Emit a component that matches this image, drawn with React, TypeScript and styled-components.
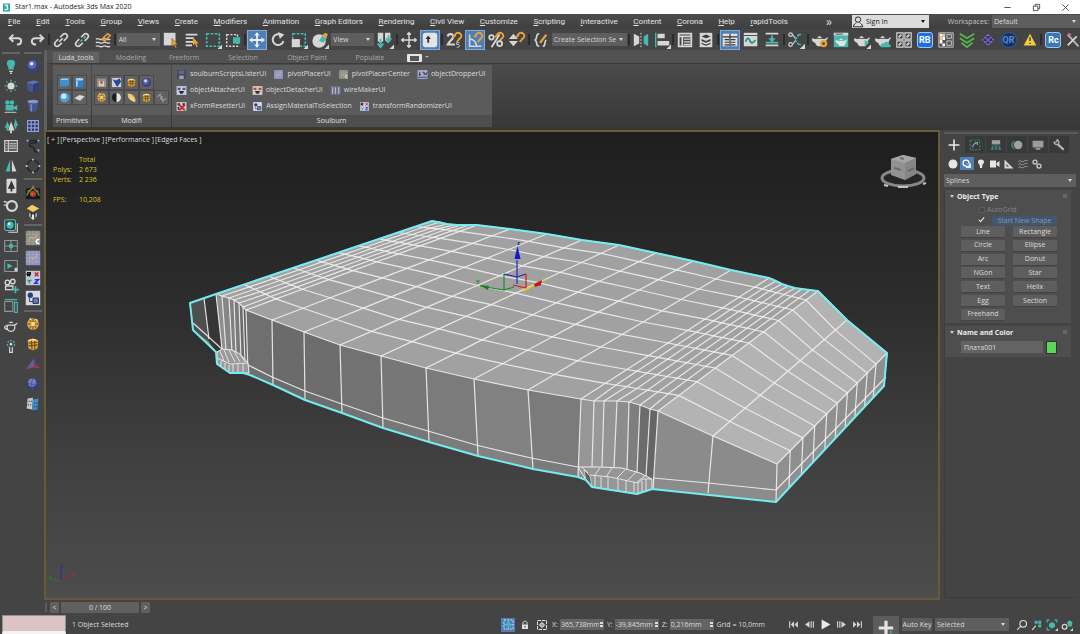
import React from "react";
import styled, { createGlobalStyle, css } from "styled-components";

const L = "#d6d6d6";
const T = "#45b9ae";
const O = "#e6a23c";

const Global = createGlobalStyle`
  * { box-sizing: border-box; }
  body { margin: 0; background: #444; }
  body, button, select, input {
    font-family: "Open Sans", "Noto Sans", sans-serif;
    font-size: 7px;
    line-height: 10px;
    color: #dcdcdc;
  }
  button { border: 0; padding: 0; background: none; }
  h2, p { margin: 0; }
`;

/* ---------- icons, all on a 20 x 20 grid ---------- */

const teapot = (fill: string) => (
  <g fill={fill}>
    <path d="M5 9h9c2 0 3-1 4-2l1 1c-1 1-2 1.500-2.500 4-.5 2-1.500 4-3 5h-6C5.500 16 5 14 4.500 13 2.500 13 1 11 1 9l1-1c1 .5 1.500 1 3 1z" />
    <path d="M6 8c1-1.500 6-1.500 7 0zM8.500 5.500h2V7h-2z" />
  </g>
);
const corner = <path d="M20 15v5h-5z" fill={L} />;
const magnet = <path d="M9 7l3-4c4-3 8 2 5 5l-4 4M11 5l1 1M16 9l-1-1" stroke={O} strokeWidth="2" fill="none" />;
const goldBall = (
  <g>
    <circle cx="10" cy="10" r="6.500" fill="#d9a84a" />
    <path d="M4 10h12M10 4v12M6 5l8 10M14 5L6 15" stroke="#6d4a12" strokeWidth="1" />
    <path d="M8 8h4v4H8z" fill="#ffe28f" />
    <path d="M6 5l2-1M13 5l2 1" stroke="#fff3c4" strokeWidth="1.500" />
  </g>
);
const goldCube = (
  <g>
    <path d="M4 6l6-2 6 2-1 9-5 2-5-2z" fill="#dba63f" />
    <path d="M5 9l10-1M5 12l10-1M8 5l1 11M12 5v11" stroke="#6e4710" strokeWidth="1.200" />
    <path d="M5 6l5-1 4 1" stroke="#ffe9a6" fill="none" strokeWidth="1.500" />
  </g>
);
const mesh = (bg: string, fg: string) => (
  <g>
    <path d="M2 2h16v16H2z" fill={bg} />
    <path d="M2 6h16M2 10h16M2 14h16M6 2v16M10 2v16M14 2v16" stroke={fg} strokeWidth="1" strokeDasharray="2 1" />
    <path d="M5 13l3-4 3 2 4-5" stroke="#e8b26a" strokeWidth="1" fill="none" />
  </g>
);

const ICONS: Record<string, React.ReactNode> = {
  undo: <path d="M7 4L3 8l4 4M3 8h9c5 0 5 7 0 7h-1" stroke={L} strokeWidth="2.200" fill="none" />,
  redo: <path d="M13 4l4 4-4 4M17 8H8c-5 0-5 7 0 7h1" stroke={L} strokeWidth="2.200" fill="none" />,
  link: <path d="M8 12l4-4M9 7l3-3c3-3 7 1 4 4l-3 3M11 13l-3 3c-3 3-7-1-4-4l3-3" stroke={L} strokeWidth="1.800" fill="none" />,
  unlink: (
    <g fill="none" strokeWidth="1.800">
      <path d="M9 7l3-3c3-3 7 1 4 4l-3 3M11 13l-3 3c-3 3-7-1-4-4l3-3" stroke={L} />
      <path d="M14 6L6 14" stroke={T} strokeDasharray="3 2" />
    </g>
  ),
  bind: (
    <g fill="none" strokeWidth="1.500">
      <path d="M2 9c3-2 5 2 8 0s5 2 8 0M2 13c3-2 5 2 8 0s5 2 8 0M2 17c3-2 5 2 8 0s5 2 8 0" stroke={L} />
      <path d="M9 9l6-6 3 2-6 6z" stroke={O} strokeWidth="1.800" />
    </g>
  ),
  selObj: (
    <g>
      <path d="M2 2h13v14H2z" fill={L} />
      <path d="M11 8v9l2-2 2 4 1.500-1-2-3h3z" fill={O} stroke="#5d3d10" strokeWidth=".5" />
    </g>
  ),
  selName: (
    <g>
      <path d="M3 4h13M3 8h9M3 12h11M3 16h7" stroke={L} strokeWidth="2" />
      <path d="M11 7v9l2-2 2 4 1.500-1-2-3h3z" fill={O} />
    </g>
  ),
  rect: (
    <g>
      <path d="M3 3h14v14H3z" fill="none" stroke={T} strokeWidth="1.800" strokeDasharray="3 1.500" />
      {corner}
    </g>
  ),
  windowSel: (
    <g>
      <path d="M3 4h12v13H3z" fill="none" stroke={L} strokeWidth="1.600" strokeDasharray="2.500 1.500" />
      <path d="M10 7h8v7h-8z" fill={T} />
    </g>
  ),
  move: <path d="M10 1l3 4h-2v4h4V7l4 3-4 3v-2h-4v4h2l-3 4-3-4h2v-4H5v2l-4-3 4-3v2h4V5H7z" fill="#eee" />,
  rotate: (
    <g>
      <path d="M14 5a6 6 0 1 0 2 6" stroke={L} strokeWidth="2.200" fill="none" />
      <path d="M10 1l7 3-5 5z" fill={L} />
    </g>
  ),
  scale: (
    <g>
      <path d="M3 3h14v14H3z" fill="none" stroke={T} strokeWidth="1.700" strokeDasharray="3 1.500" />
      <path d="M2 9h9v9H2z" fill={L} />
      {corner}
    </g>
  ),
  place: (
    <g>
      <circle cx="9" cy="11" r="7.500" fill={L} />
      <path d="M9 11l4-7 5 3-4 6z" fill={T} />
      <path d="M12 5l4-3 3 2-3 4z" fill={O} />
      {corner}
    </g>
  ),
  pivot: (
    <g>
      <path d="M2 2h6v9l-3 3-3-3zM10 2h6v8l-3 3-3-3z" fill={L} />
      <path d="M5 9v9M2 14l3 4 3-4M14 5v7M11 8l3 4 3-4" stroke={T} strokeWidth="2" fill="none" />
      {corner}
    </g>
  ),
  manip: <path d="M10 2v16M2 10h16M8 4l2-2 2 2M8 16l2 2 2-2M4 8l-2 2 2 2M16 8l2 2-2 2" stroke={L} strokeWidth="1.700" fill="none" />,
  keyb: (
    <g>
      <rect x="2" y="2" width="16" height="16" rx="3" fill="#e4e4e4" />
      <path d="M8 5l3 4H9v4H7V9H5z" fill="#333" />
    </g>
  ),
  snap: (
    <g>
      <path d="M3 6c1-4 7-3 6 1-1 3-5 5-6 8h8" stroke={L} strokeWidth="2.400" fill="none" />
      {magnet}
      <path d="M16 13h-3v2c4-1 4 4 0 3" stroke={L} strokeWidth="1" fill="none" />
    </g>
  ),
  angle: (
    <g>
      <path d="M4 4v13h13M4 9c4 0 7 3 8 8" stroke={L} strokeWidth="1.700" fill="none" />
      {magnet}
    </g>
  ),
  percent: (
    <g fill="none" stroke={L} strokeWidth="2">
      {magnet}
      <circle cx="5" cy="7" r="2.500" />
      <circle cx="14" cy="14" r="2.800" />
      <path d="M14 4L5 18" />
    </g>
  ),
  spinner: (
    <g>
      <path d="M1 9l5-6 5 6zM1 11l5 6 5-6z" fill={L} />
      {magnet}
    </g>
  ),
  braces: (
    <g fill="none" strokeWidth="1.800">
      <path d="M8 3c-5 0-1 6-5 7 4 1 0 7 5 7M12 17c4 0 1-6 4-7" stroke={L} />
      <path d="M9 13l7-9" stroke={O} strokeWidth="2.500" />
    </g>
  ),
  mirror: (
    <g>
      <path d="M2 3l6 3v8l-6 3z" fill={L} />
      <path d="M18 3l-5 3v8l5 3z" fill={T} />
      <path d="M10 2v16" stroke={L} strokeDasharray="2 1.500" />
    </g>
  ),
  align: (
    <g>
      <path d="M3 2v16" stroke={T} strokeWidth="1.500" />
      <path d="M5 3h8v5H5zM5 11h13v5H5z" fill={L} />
      {corner}
    </g>
  ),
  layers: (
    <g fill="none" stroke={L} strokeWidth="1.500">
      <path d="M3 3h14v14H3zM3 6h14M7 6v11" strokeWidth="2" />
      <path d="M9 9h7M9 12h7M9 15h7" />
    </g>
  ),
  stack: (
    <g>
      <path d="M3 2h14v16H3z" fill={L} />
      <path d="M10 4l5 2-5 2-5-2zM5 9l5 2 5-2v2l-5 2-5-2zM5 13l5 2 5-2v1.500l-5 2-5-2z" fill="#3c3c3c" />
    </g>
  ),
  ribbon: (
    <g>
      <path d="M2 3h16v14H2z" fill="#e2e2e2" />
      <path d="M2 6.500h16M4 9.500h5M11 9.500h5M4 12.500h5M11 12.500h5M4 15.500h5M11 15.500h5M10 3v14" stroke="#333" strokeWidth="1.300" />
    </g>
  ),
  curve: (
    <g>
      <path d="M2 2h15v15H2z" fill={L} />
      <path d="M2 5h15" stroke="#444" />
      <path d="M4 12c2-6 4-4 5-1s3 3 6-1" stroke="#279187" strokeWidth="2" fill="none" />
    </g>
  ),
  dope: (
    <g>
      <path d="M3 2h14v2H3zM3 15h14v2H3z" fill={L} />
      <path d="M10 5v6M3 13h14" stroke={T} strokeWidth="2" />
      <path d="M6 8h8l-4 5z" fill={T} />
    </g>
  ),
  schematic: (
    <g fill="none" stroke={L} strokeWidth="1.300">
      <circle cx="4" cy="4" r="2" />
      <circle cx="4" cy="15" r="2" />
      <path d="M6 4l4 5M6 15l4-5" />
      <path d="M13 4l-4 6 4 5M13 4h4M13 15h4" stroke={T} strokeDasharray="2.500 1.200" strokeWidth="1.800" />
      {corner}
    </g>
  ),
  potGear: (
    <g>
      {teapot(L)}
      <circle cx="14" cy="14" r="4" fill={O} />
      <circle cx="14" cy="14" r="1.500" fill="#5b4016" />
    </g>
  ),
  potWin: (
    <g>
      <path d="M2 2h16v16H2z" fill={T} />
      <path d="M2 2h16v3H2z" fill={L} />
      <path d="M4 3.500h8" stroke="#444" />
      <g transform="translate(3 4) scale(.75)">{teapot("#e4e4e4")}</g>
    </g>
  ),
  potPlay: (
    <g>
      {teapot(L)}
      <path d="M13 10l5 3-5 4z" fill={T} />
      {corner}
    </g>
  ),
  potCloud: (
    <g>
      {teapot(L)}
      <path d="M8 18c-2-3 2-5 3-4 2-4 6-1 6 1 3 1 2 3 0 3z" fill={T} />
    </g>
  ),
  four: (
    <g fill="none" stroke={L} strokeWidth="1.300">
      <path d="M2 2h7v7H2zM11 2h7v7h-7zM2 11h7v7H2zM11 11h7v7h-7z" />
      <path d="M4 7l3-3M13 7l3-3M4 16l3-3M13 16l3-3" strokeWidth="2" />
    </g>
  ),
  checker: (
    <g>
      <path d="M2 2h16v16H2z" fill="#555" stroke="#c8c8c8" />
      <path d="M3 3h3v3H3zM6 6h3v4H6zM3 10h3v4H3zM6 14h3v3H6z" fill="#fff" />
      <path d="M6 3h3v3H6zM3 6h3v4H3z" fill="#f1d08f" />
      <path d="M11 4h5v4h-5zM11 11h5v5h-5z" stroke="#ccc" fill="none" />
    </g>
  ),
  chevrons: <path d="M2 3l8 5 8-5M2 8l8 5 8-5M4 13l6 5 6-5" stroke="#55b848" strokeWidth="2" fill="none" />,
  diamonds: (
    <g>
      <path d="M10 4l6 6-6 6-6-6z" fill="#342d66" stroke="#8a78d8" strokeWidth="1.500" strokeDasharray="2 1.500" />
      <path d="M7 7l6 6M13 7l-6 6" stroke="#7264b8" strokeWidth="1.500" />
    </g>
  ),
  warn: (
    <g>
      <path d="M10 3l7 13H3z" fill="#f0cf3c" />
      <path d="M10 7v4M10 13v1.500" stroke="#333" strokeWidth="1.500" />
    </g>
  ),
  tools: (
    <g fill="none">
      <path d="M3 4l12 13" stroke="#b9b9b9" strokeWidth="2" />
      <path d="M3 16L13 6" stroke={L} strokeWidth="2" />
      <path d="M3 3l4 1" stroke="#c66" strokeWidth="2" />
    </g>
  ),

  bulb: (
    <g>
      <path d="M10 3c6 0 5 6 3 8v3H7v-3C5 9 4 3 10 3z" fill={T} />
      <path d="M8 16h4M9 18h2" stroke={L} strokeWidth="1.500" />
    </g>
  ),
  sun: (
    <g>
      <circle cx="10" cy="10" r="4" fill={L} />
      <path d="M10 3v2M10 15v2M3 10h2M15 10h2M5 5l1 1M14 14l1 1M15 5l-1 1M5 15l1-1" stroke={T} strokeWidth="1.500" />
    </g>
  ),
  cam: (
    <g fill={T}>
      <circle cx="6" cy="6" r="2.500" />
      <circle cx="11" cy="6" r="2.500" />
      <path d="M4 9h9v6H4zM13 11l4-2v6l-4-2z" />
      <path d="M3 17h13" stroke={L} />
    </g>
  ),
  trees: (
    <g>
      <path d="M6 5l3 7H7v3H5v-3H3zM15 2l3 8h-2v3h-2v-3h-1z" fill={T} />
      <path d="M10 5l4 10h-3v3H9v-3H7z" fill={L} />
    </g>
  ),
  list: (
    <g fill="none" stroke={L}>
      <path d="M3 4h14v12H3zM7 4v12" strokeWidth="1.300" />
      <path d="M8 7h8M8 9h8M8 11h8M8 13h8M4 7h2M4 10h2M4 13h2" />
    </g>
  ),
  treeHalf: (
    <g>
      <path d="M9 3v13H4z" fill={T} />
      <path d="M11 3v13h5z" fill={L} />
    </g>
  ),
  treeCard: (
    <g>
      <rect x="5" y="2" width="11" height="16" rx="1" fill={L} />
      <path d="M10.500 4l4 9h-3v3h-2v-3h-3z" fill="#333" />
    </g>
  ),
  ring: (
    <g>
      <circle cx="11" cy="10" r="5.500" fill="none" stroke={L} strokeWidth="2.500" />
      <path d="M2 5l4 1M2 9h4" stroke={L} strokeWidth="1.500" />
    </g>
  ),
  ballStack: (
    <g>
      <path d="M7 17h10V7M5 15" stroke={L} fill="none" strokeWidth="1.200" />
      <rect x="3" y="3" width="12" height="12" rx="2" fill="#244" stroke="#7fb0ac" strokeWidth="1.200" />
      <circle cx="9" cy="9" r="4" fill={T} />
      <circle cx="8" cy="7.500" r="1.300" fill="#e8ffff" />
    </g>
  ),
  quad: (
    <g fill="none" stroke="#9aa5a4">
      <rect x="3" y="4" width="14" height="12" />
      <path d="M10 4v12M3 10h14" />
      <circle cx="10" cy="10" r="2.500" fill={T} stroke="none" />
    </g>
  ),
  playBox: (
    <g fill="none" stroke="#9aa5a4">
      <rect x="3" y="4" width="14" height="12" />
      <path d="M6 7l6 3-6 3z" fill={T} stroke="none" />
      <path d="M14 12h3v4h-3z" fill={L} stroke="none" />
    </g>
  ),
  camPlus: (
    <g>
      <g fill="none" stroke={L} strokeWidth="1.500">
        <circle cx="6" cy="6" r="2.500" />
        <circle cx="12" cy="5" r="2.500" />
        <path d="M4 10h8v4H4z" />
      </g>
      <path d="M15 10v8M11 14h8" stroke={T} strokeWidth="1.800" />
    </g>
  ),
  frameT: (
    <g fill="none">
      <path d="M3 5h9v11H3z" stroke="#8c9796" strokeWidth="1.200" />
      <path d="M3 3h14M14 6h3v11h-3z" stroke={T} strokeWidth="1.300" />
    </g>
  ),
  pot: (
    <g fill="none" stroke={L} strokeWidth="1.400">
      <path d="M6 9h8l3-2M14 9c1 5-1 7-4 7s-5-2-4-7M6 10C2 9 2 13 6 14M8 6h4" />
    </g>
  ),
  bulbO: (
    <g fill="none">
      <circle cx="10" cy="8" r="4" stroke={T} strokeWidth="1.500" strokeDasharray="2 1.500" />
      <circle cx="10" cy="8" r="1.500" fill={L} />
      <path d="M8.500 12v5h3v-5" stroke={L} strokeWidth="1.300" />
    </g>
  ),

  sphere: (
    <g>
      <circle cx="10" cy="10" r="7" fill="#36437c" />
      <circle cx="9" cy="8.500" r="4.500" fill="#5a6bab" />
      <circle cx="8.500" cy="7.500" r="2" fill="#dfe5ff" />
    </g>
  ),
  cube: (
    <g>
      <path d="M3 6l8-2 6 1.500v8.500l-7 3-6-2z" fill="#46558f" />
      <path d="M3 6l8-2 6 1.500L10 8z" fill="#6474ae" />
      <path d="M10 8l7-2.500v8.500l-7 3z" fill="#333f74" />
    </g>
  ),
  cyl: (
    <g>
      <path d="M4 5l2 10c1 2 7 2 8 0l2-10z" fill="#46558f" />
      <ellipse cx="10" cy="5" rx="6" ry="2" fill="#8897cf" />
      <path d="M8 8v8" stroke="#8090c8" strokeWidth="1.500" />
    </g>
  ),
  grid: (
    <g>
      <path d="M4 4h12v12H4z" fill="#2b3560" />
      <path d="M4 4h12v12H4zM8 4v12M12 4v12M4 8h12M4 12h12" fill="none" stroke="#8fa0dc" strokeWidth="1.300" />
    </g>
  ),
  spline: (
    <g fill="none">
      <path d="M4 4h12M15 4c-2 6-9 0-9 4 0 5 6 1 5 6 1 4 5 2 5 1" stroke="#1f232b" strokeWidth="1.600" />
      <path d="M3 3h2v2H3zM15 3h2v2h-2zM15 14h2v2h-2z" fill="#a9b9f0" />
    </g>
  ),
  circlePts: (
    <g>
      <circle cx="10" cy="10" r="6.500" fill="none" stroke="#1f232b" strokeWidth="1.500" />
      <path d="M9 2h2v2H9zM9 16h2v2H9zM2 9h2v2H2zM16 9h2v2h-2z" fill="#a9c4f0" />
    </g>
  ),
  redNet: (
    <g>
      <path d="M2 6h16v12H2z" fill="#1c1c1c" />
      <path d="M5 10l5-5 5 5 2 4M5 10l-2 4" stroke="#4fb34c" fill="none" strokeWidth="1.300" />
      <circle cx="10" cy="12" r="3.500" fill="#c2352a" />
      <path d="M9 3h2v2H9zM4 8h2v2H4zM14 8h2v2h-2z" fill="#f05040" />
      <path d="M8 11h2v2H8z" fill="#57b04e" />
    </g>
  ),
  drop: (
    <g>
      <path d="M3 6l6-4 8 4-7 4z" fill="#f5cf5c" />
      <path d="M6 11l4 2 4-2v4l-4 4-4-4z" fill="#e8e8e8" />
      <path d="M8 11v5M12 11v6" stroke="#222" strokeWidth="1.500" />
    </g>
  ),
  meshC: (
    <g>
      {mesh("#8f8f88", "#aaa79c")}
      <path d="M17 12c-4-2-5 5 0 4" stroke="#fff" strokeWidth="1.800" fill="none" />
    </g>
  ),
  meshP: mesh("#8f93bd", "#a8acd0"),
  rxyz: (
    <g>
      <path d="M2 2h16v16H2z" fill="#c4c8dc" />
      <path d="M4 8V4h3v2H4l3 2" stroke="#111" strokeWidth="1.500" fill="none" />
      <path d="M12 4l4 4M16 4l-4 4" stroke="#c22" strokeWidth="1.600" />
      <path d="M4 12l2 2 2-2M6 14v2" stroke="#29a33a" strokeWidth="1.600" fill="none" />
      <path d="M12 12h4l-4 4h4" stroke="#2430d8" strokeWidth="1.600" fill="none" />
    </g>
  ),
  assign: (
    <g>
      <path d="M2 2h16v16H2z" fill="#d6d9e4" />
      <circle cx="7" cy="7" r="3" fill="#24407e" />
      <path d="M6 10v4h4" stroke="#333" fill="none" />
      <path d="M10 10h6v6h-6z" fill="#5f7cc0" stroke="#223" />
    </g>
  ),
  goldBall,
  goldCube,
  prism: (
    <g>
      <path d="M3 15L11 4l1 9z" fill="#5464a4" />
      <path d="M11 4l6 10-5-1z" fill="#6f3a5c" />
      <path d="M3 15l9-2 5 1" stroke="#b03a4c" strokeWidth="1.500" fill="none" />
    </g>
  ),
  sphereGrid: (
    <g>
      <circle cx="10" cy="10" r="7" fill="#343f74" />
      <circle cx="9" cy="8.500" r="4.500" fill="#7382bf" />
      <path d="M4 9c4 2 8 2 12 0M10 3c-2 4-2 10 0 14" stroke="#4a578f" fill="none" />
    </g>
  ),
  tiles: (
    <g>
      <path d="M4 4l6-1-1 13-6-1z" fill="#c9c9c9" />
      <path d="M10 5l6-1-1 12-6 1z" fill="#3d8fd0" />
      <path d="M5 7h4M4 11h4M11 9h4M11 13h4" stroke="#333" strokeDasharray="1.500 1" />
    </g>
  ),

  pBox: (
    <g>
      <path d="M3 6l3-2h11v9l-3 3H3z" fill="#3f8fd0" />
      <path d="M3 6l3-2h11l-3 2z" fill="#9cd0f5" />
    </g>
  ),
  pCyl: (
    <g>
      <path d="M4 5v11c2 2 10 2 12 0V5z" fill="#2e7fc4" />
      <path d="M6 7v9" stroke="#a6d6f7" strokeWidth="2.500" />
      <ellipse cx="10" cy="5" rx="6" ry="2" fill="#a6d6f7" />
    </g>
  ),
  pBall: (
    <g>
      <circle cx="10" cy="10" r="7.500" fill="#4aa0dd" />
      <circle cx="9" cy="8" r="4" fill="#c8e9fb" />
    </g>
  ),
  pPlane: <path d="M2 11l8-5 8 2-7 7z" fill="#d9d9d9" />,
  mCube: (
    <g>
      <path d="M3 4h14v13H3z" fill="#9b8f8a" />
      <path d="M6 8h8v8H6z" fill="#d8ccc4" />
      <path d="M10 8v4" stroke="#b5342c" strokeWidth="3" />
    </g>
  ),
  mHeart: (
    <g>
      <path d="M3 3h14v14H3z" fill="#c7cede" />
      <path d="M4 5l5 2 6-3 2 5-6 8z" fill="#2a4590" />
    </g>
  ),
  mHalf: (
    <g>
      <circle cx="10" cy="10" r="7" fill="#1c1c1c" />
      <path d="M10 3a7 7 0 0 1 0 14z" fill="#e6e6e6" />
    </g>
  ),
  mLeaf: (
    <g>
      <path d="M4 4c8 0 13 5 12 13C9 16 4 12 4 4z" fill="#e7bd63" />
      <path d="M6 5l9 11M5 9l8 7" stroke="#fff0c0" strokeWidth="1.200" />
    </g>
  ),
  mLink: <path d="M3 9l5-4v3c4 0 4 4 0 4M17 11l-5 5v-3c-4 0-4-4 0-4" stroke="#9a9a9a" strokeWidth="1.800" fill="none" />,
  disk: (
    <g>
      <path d="M2 2h16v16H2z" fill="#464862" />
      <path d="M5 3h10v6H5z" fill="#63668a" />
      <path d="M6 12h8v6H6z" fill="#9fa2ba" />
    </g>
  ),
  attach: (
    <g>
      <path d="M1 2h18v16H1z" fill="#c9cce0" />
      <path d="M3 5h5v4H3zM12 5h5v4h-5z" fill="#47508c" />
      <path d="M5 11h10l-3 5H8z" fill="#26283a" />
    </g>
  ),
  detach: (
    <g>
      <path d="M1 2h18v16H1z" fill="#d5c8c4" />
      <path d="M3 5h5v4H3zM12 5h5v4h-5z" fill="#c0453a" />
      <path d="M5 11h10l-3 5H8z" fill="#33333c" />
    </g>
  ),
  wire: (
    <g>
      <path d="M1 2h18v16H1z" fill="#6b6f86" />
      <path d="M4 4c3 4-1 8 1 12M9 4c3 4-1 8 1 12M16 4v12" stroke="#d9dced" strokeWidth="1.500" fill="none" />
    </g>
  ),
  reset: (
    <g>
      <path d="M1 2h18v16H1z" fill="#c9c9d2" />
      <path d="M3 4h4v4H3zM12 4h4v4h-4zM3 11h3v5H3z" fill="#2b2b3b" />
      <path d="M6 7l10 10M16 7L6 17" stroke="#d8232a" strokeWidth="3.500" />
    </g>
  ),
  dropper: (
    <g>
      <path d="M1 2h18v16H1z" fill="#a9aed0" />
      <path d="M5 5v6M3 9l2 3 2-3M10 6h3v5M14 7l2 4 2-5M2 15h16" stroke="#272c55" strokeWidth="1.500" fill="none" />
    </g>
  ),

  plus: <path d="M10 1v18M1 10h18" stroke="#ececec" strokeWidth="2.600" />,
  modify: (
    <g fill="none">
      <path d="M2 2h16v16H2z" stroke="#387f79" strokeWidth="1.800" strokeDasharray="4 2" />
      <path d="M6 14c0-5 3-7 8-8M10 6h4v4" stroke="#7fa5a2" strokeWidth="2" />
    </g>
  ),
  hier: (
    <g>
      <path d="M3 2h14v7H3z" fill="#9aa3a2" />
      <path d="M10 8v4M4 16v-4h12v4" stroke="#3a8a83" strokeWidth="1.500" fill="none" />
      <path d="M2 14h4v4H2zM14 14h4v4h-4zM8 14h4v4H8z" fill="#3a8a83" />
    </g>
  ),
  motion: (
    <g>
      <circle cx="12" cy="10" r="7" fill="#a2a2a2" />
      <path d="M6 3a9 9 0 0 0 0 14M3 5a9 9 0 0 0 0 10" stroke="#387f79" strokeWidth="2" fill="none" />
    </g>
  ),
  display: <path d="M1 3h18v11H1zM6 15h8v3H6z" fill="#9b9b9b" />,
  wrench: (
    <g fill="none" stroke="#b8b8b8">
      <path d="M8 9l10 9" strokeWidth="3.500" />
      <path d="M2 5c0 5 7 6 8 1 0-2-1-4-3-5l-1 4z" strokeWidth="2" />
    </g>
  ),
  dot: <circle cx="10" cy="10" r="9" fill="#e6e6e6" />,
  shapes: (
    <g>
      <circle cx="8" cy="8" r="6" fill="none" stroke="#fff" strokeWidth="2.500" />
      <path d="M8 9h10v9H8z" fill="#e9e9e9" />
      <circle cx="11" cy="11" r="3" fill="#5b87c6" />
    </g>
  ),
  lamp: <path d="M10 1c8 0 7 8 3 10l-1 7H8l-1-7C3 9 2 1 10 1z" fill="#e6e6e6" />,
  camera: <path d="M0 3h12v14H0zM13 8l6-4v12l-6-4z" fill="#e6e6e6" />,
  tape: <path d="M1 1l18 18H1zM5 10v5h5z" fill="#d8d8d8" fillRule="evenodd" />,
  waves: <path d="M1 5c4-4 6 3 10 0s4-2 8-2M1 11c4-4 6 3 10 0s4-2 8-2M1 17c4-4 6 3 10 0s4-2 8-2" stroke="#a7a7a7" strokeWidth="1.800" fill="none" />,
  gears: (
    <g fill="none" stroke="#d0d0d0" strokeWidth="2.500">
      <circle cx="6" cy="6" r="4" />
      <circle cx="14" cy="14" r="4" />
    </g>
  ),

  isolate: (
    <g>
      <path d="M3 3h14v14H3z" fill="none" stroke="#cfe5f5" strokeWidth="1.500" strokeDasharray="3 2" />
      <path d="M3 10h14M10 3v14" stroke="#9fc8e8" />
      <path d="M7 7h6v6H7z" fill={T} />
    </g>
  ),
  lock: (
    <g>
      <path d="M4 9h12v9H4z" fill="#e0e0e0" />
      <path d="M6 9V6c0-5 8-5 8 0v3" stroke="#e0e0e0" strokeWidth="2" fill="none" />
      <path d="M9 12h2v3H9z" fill="#333" />
    </g>
  ),
  xformMode: (
    <g fill="none" stroke="#e0e0e0" strokeWidth="2">
      <path d="M1 1h18v18H1z" strokeDasharray="7 2" />
      <circle cx="10" cy="10" r="4" />
      <path d="M10 3v14M3 10h14" strokeWidth="1.400" />
    </g>
  ),
  first: <path d="M2 4h2v12H2zM11 4v12l-6-6zM18 4v12l-6-6z" fill={L} />,
  prev: <path d="M10 4v12l-8-6zM12 4h2v12h-2zM16 4h2v12h-2z" fill={L} />,
  play: <path d="M3 1l16 9-16 9z" fill="#e8e8e8" />,
  next: <path d="M10 4v12l8-6zM2 4h2v12H2zM6 4h2v12H6z" fill={L} />,
  last: <path d="M16 4h2v12h-2zM2 4v12l6-6zM9 4v12l6-6z" fill={L} />,
  key: (
    <g>
      <path d="M10 1v18M1 10h18" stroke="#e4e4e4" strokeWidth="4" />
      <path d="M15 13l3 2-3 2" fill={T} />
    </g>
  ),
  zoom: (
    <g fill="none" stroke={L} strokeWidth="2">
      <circle cx="12" cy="8" r="5.500" />
      <path d="M8 12l-6 6" />
    </g>
  ),
  zoomAll: (
    <g>
      <path d="M6 3h5v5H6zM12 3h5v5h-5zM12 9h5v5h-5z" fill={T} />
      <path d="M8 11l-6 7" stroke={L} strokeWidth="2" />
    </g>
  ),
  extents: (
    <g fill="none">
      <path d="M2 6V2h4M14 2h4v4M6 18H2v-4" stroke={T} strokeWidth="2" />
      <path d="M5 8l5-3 5 3v5l-5 3-5-3z" fill={T} />
      {corner}
    </g>
  ),
  extAll: (
    <g>
      <path d="M10 6l4-4 5 3-1 7-5 1z" fill={T} />
      <circle cx="6" cy="13" r="4" fill="none" stroke={L} strokeWidth="2" />
      {corner}
    </g>
  ),
  user: (
    <g fill="none" stroke="#222" strokeWidth="1.600">
      <circle cx="10" cy="6" r="4.500" />
      <path d="M2 18c1-5 4-5 5-7M18 18c-1-5-4-5-5-7M2 18h16" />
    </g>
  ),
  app3: (
    <g>
      <path d="M2 1h16v18H2z" fill="#3aa9a4" />
      <path d="M6 5c7-3 8 3 4 4 5 1 3 8-4 5" stroke="#fff" strokeWidth="2.500" fill="none" />
    </g>
  ),
  min: <path d="M3 10h14" stroke="#333" strokeWidth="1.800" />,
  restore: <path d="M3 7h10v10H3zM7 7V3h10v10h-4" stroke="#333" strokeWidth="1.800" fill="none" />,
  close: <path d="M3 3l14 14M17 3L3 17" stroke="#333" strokeWidth="1.800" />,
};

const Svg = styled.svg<{ $s: number }>`
  display: block;
  flex: none;
  width: ${(p) => p.$s}px;
  height: ${(p) => p.$s}px;
`;
const Icon = ({ name, size = 18 }: { name: string; size?: number }) => (
  <Svg $s={size} viewBox="0 0 20 20" aria-hidden="true">
    {ICONS[name]}
  </Svg>
);

/* ---------- window chrome ---------- */

const Shell = styled.div`
  min-height: 100vh;
  display: flex;
  flex-direction: column;
  overflow: hidden;
  background: #444;
`;
const TitleBar = styled.header`
  height: 14px;
  display: flex;
  align-items: center;
  gap: 4px;
  padding: 0 10px 0 2px;
  background: #fff;
`;
const TitleText = styled.span`
  flex: 1;
  color: #222;
`;
const WinButtons = styled.div`
  display: flex;
  gap: 20px;
`;
const MenuBar = styled.div`
  height: 15px;
  display: flex;
  align-items: center;
  background: linear-gradient(#4d4d4d, #3f3f3f);
`;
const Menus = styled.nav`
  flex: 0 1 788px;
  display: flex;
  justify-content: space-between;
  padding-left: 8px;
`;
const MenuItem = styled.button`
  white-space: nowrap;
  font-family: Roboto, sans-serif;
  font-size: 8px;
  color: #e2e2e2;
  &::first-letter { text-decoration: underline; }
`;
const More = styled.button`
  width: 64px;
  padding-left: 18px;
  font-size: 12px;
  line-height: 12px;
`;
const SelectBox = styled.div<{ $w?: number; $light?: boolean }>`
  position: relative;
  display: flex;
  align-items: center;
  flex: none;
  width: ${(p) => (p.$w ? `${p.$w}px` : "auto")};
  height: 13px;
  background: ${(p) => (p.$light ? "#dcdcdc" : "#5e5e5e")};
  &::after {
    content: "";
    position: absolute;
    right: 4px;
    top: 5px;
    border: 2px solid transparent;
    border-top: 3px solid ${(p) => (p.$light ? "#111" : "#d8d8d8")};
    pointer-events: none;
  }
`;
const Select = styled.select<{ $dark?: boolean }>`
  appearance: none;
  flex: 1;
  width: 100%;
  min-width: 0;
  height: 100%;
  border: 0;
  padding: 0 8px 0 2px;
  background: none;
  color: ${(p) => (p.$dark ? "#1a1a1a" : "#d8d8d8")};
`;
const Drop = ({ label, value, w, light, children }: { label: string; value: string; w?: number; light?: boolean; children?: React.ReactNode }) => (
  <SelectBox $w={w} $light={light}>
    {children}
    <Select aria-label={label} $dark={light}>
      <option>{value}</option>
    </Select>
  </SelectBox>
);
const WorkLabel = styled.label`
  margin: 0 3px 0 auto;
  color: #c4c4c4;
`;

const Toolbar = styled.div`
  height: 21px;
  display: flex;
  align-items: center;
  justify-content: space-between;
  margin-right: -5px;
  padding-left: 6px;
`;
const ToolButton = styled.button<{ $on?: boolean }>`
  flex: none;
  width: 20px;
  height: 20px;
  display: grid;
  place-items: center;
  ${(p) =>
    p.$on &&
    css`
      background: #4f7fb8;
      box-shadow: inset 0 0 0 1px #86a9d2;
    `}
`;
const Sep = styled.i`
  flex: none;
  width: 2px;
  height: 11px;
  background: #2c2c2c;
`;
const Badge = styled.span<{ $round?: boolean; $bg: string; $fg: string }>`
  width: 16px;
  height: 16px;
  border-radius: ${(p) => (p.$round ? 8 : 3)}px;
  border: 1px solid ${(p) => (p.$round ? "#2d5aa0" : "#9cc4f2")};
  background: ${(p) => p.$bg};
  color: ${(p) => p.$fg};
  font-family: Roboto, sans-serif;
  font-size: 9px;
  line-height: 14px;
  font-weight: 700;
  text-align: center;
`;

/* ---------- body ---------- */

const Body = styled.div`
  flex: 1;
  display: flex;
`;
const Side = styled.aside`
  flex: none;
  width: 44px;
  display: flex;
  justify-content: space-between;
  padding: 0 1px;
`;
const SideCol = styled.div`
  display: flex;
  flex-direction: column;
  align-items: center;
`;
const SideButton = styled.button`
  width: 20px;
  height: 20px;
  display: grid;
  place-items: center;
`;
const SideRule = styled.i`
  width: 18px;
  height: 6px;
  border: solid #444;
  border-width: 2px 0;
  background: #646464;
`;
const Main = styled.div`
  flex: 1;
  min-width: 0;
  display: flex;
  flex-direction: column;
`;
const Ribbon = styled.section`
  display: flex;
  flex-direction: column;
  height: 80px;
  border-left: 3px solid #606060;
  background: linear-gradient(#4a4a4a 20%, #373737);
`;
const Tabs = styled.div`
  display: flex;
  align-items: flex-end;
  height: 14px;
  padding-left: 6px;
  border-bottom: 1px solid #3a3a3a;
  background: #515151;
`;
const Tab = styled.button<{ $w: number; $on?: boolean }>`
  flex: none;
  width: ${(p) => p.$w}px;
  height: 11px;
  color: ${(p) => (p.$on ? "#dedede" : "#a8a8a8")};
  background: ${(p) => (p.$on ? "#626262" : "none")};
`;
const TabToggle = styled.button`
  display: flex;
  align-items: center;
  height: 11px;
  gap: 3px;
  &::before {
    content: "";
    width: 9px;
    height: 5px;
    border: 2px solid #e6e6e6;
    border-width: 2px 3px 1px;
    border-radius: 1px;
    background: #555;
  }
  &::after {
    content: "";
    border: 2px solid transparent;
    border-top-color: #aaa;
  }
`;
const Groups = styled.div`
  flex: 1;
  display: flex;
  gap: 1px;
  padding: 1px 0 3px 6px;
`;
const Group = styled.div`
  display: flex;
  flex-direction: column;
  background: #5b5b5b;
`;
const GroupBody = styled.div<{ $pad: string }>`
  flex: 1;
  display: flex;
  flex-direction: column;
  justify-content: center;
  padding: ${(p) => p.$pad};
`;
const GroupName = styled.div`
  height: 12px;
  line-height: 11px;
  background: #4e4e4e;
  text-align: center;
  color: #e0e0e0;
`;
const Cells = styled.div`
  display: flex;
`;
const Cell = styled.button`
  width: 15px;
  height: 15px;
  display: grid;
  place-items: center;
  border: 1px solid #4a4a4a;
  background: #616161;
`;
const ScriptRow = styled.div`
  display: flex;
  gap: 7px;
  height: 16px;
`;
const Script = styled.button`
  display: flex;
  align-items: center;
  gap: 3px;
  white-space: nowrap;
`;

const Work = styled.div`
  flex: 1;
  display: flex;
`;
const Viewport = styled.main`
  position: relative;
  flex: 1;
  min-width: 0;
  min-height: 460px;
  border: 2px solid #685a36;
  background: linear-gradient(#1e1e1e 0%, #2d2d2d 38%, #404040 70%, #4c4c4c 100%);
`;
const Scene = styled.svg`
  position: absolute;
  inset: 0;
  width: 100%;
  height: 100%;
`;
const ViewLabel = styled.div`
  position: relative;
  display: flex;
  gap: 1px;
  padding: 3px 1px;
`;
const Stats = styled.dl`
  position: relative;
  display: grid;
  grid-template-columns: 26px auto;
  justify-content: start;
  margin: 7px;
  color: #d3c32c;
  dt, dd { margin: 0; height: 10px; }
`;
const CommandPanel = styled.aside`
  flex: none;
  width: 140px;
  display: flex;
  flex-direction: column;
  padding: 1px 2px 0 4px;
`;
const PanelTabs = styled.div`
  display: flex;
  margin-top: 1px;
  border-top: 2px solid #5a5a5a;
  padding-top: 2px;
`;
const PanelTab = styled.button<{ $on?: boolean }>`
  width: 20px;
  height: 17px;
  display: grid;
  place-items: center;
  margin-right: 1px;
  background: ${(p) => (p.$on ? "#444" : "#393939")};
`;
const Kinds = styled.div`
  display: flex;
  margin: 4px 0 4px 2px;
`;
const Kind = styled.button<{ $on?: boolean }>`
  width: 14px;
  height: 13px;
  display: grid;
  place-items: center;
  background: ${(p) => (p.$on ? "#4f7fb8" : "none")};
`;
const Rollouts = styled.div`
  flex: 1;
  display: flex;
  flex-direction: column;
  gap: 3px;
  margin: 3px 1px 2px 0;
  padding-right: 6px;
  border: solid #3c3c3c;
  border-width: 0 0 1px 1px;
`;
const Rollout = styled.section`
  padding: 2px 14px 3px 16px;
  background: #4e4e4e;
`;
const RolloutTitle = styled.h2`
  position: relative;
  margin: 0 -10px 3px -4px;
  font-size: 7px;
  line-height: 10px;
  font-weight: 700;
  color: #ececec;
  &::before {
    content: "";
    position: absolute;
    left: -7px;
    top: 3px;
    border: 2px solid transparent;
    border-top: 3px solid #ccc;
  }
  &::after {
    content: "";
    position: absolute;
    right: 0;
    top: 2px;
    width: 4px;
    height: 4px;
    background: #666;
  }
`;
const CheckRow = styled.label<{ $dim?: boolean }>`
  display: flex;
  align-items: center;
  gap: ${(p) => (p.$dim ? 2 : 7)}px;
  height: 10px;
  padding-left: 18px;
  color: ${(p) => (p.$dim ? "#858585" : "#8098b8")};
`;
const Check = styled.input`
  appearance: none;
  flex: none;
  width: 6px;
  height: 6px;
  margin: 0;
  border: 1px solid #5c5c5c;
  background: #494949;
  &:checked {
    width: 3px;
    height: 6px;
    margin: 0 2px 2px 1px;
    border: solid #eee;
    border-width: 0 1px 1px 0;
    background: none;
    transform: rotate(40deg);
  }
`;
const StartShape = styled.span`
  flex: 1;
  height: 9px;
  line-height: 9px;
  border-radius: 1px;
  background: #42566f;
  text-align: center;
`;
const ObjectGrid = styled.div`
  display: grid;
  grid-template-columns: 1fr 1fr;
  column-gap: 8px;
  align-content: space-between;
  height: 94px;
  margin-top: 1px;
`;
const ObjectButton = styled.button`
  height: 11px;
  border-radius: 1px;
  background: #5e5e5e;
  box-shadow: 0 1px 0 #434343;
`;
const NameRow = styled.div`
  display: flex;
  gap: 3px;
`;
const NameInput = styled.input`
  flex: 1;
  min-width: 0;
  height: 12px;
  border: 0;
  padding: 0 3px;
  background: #636363;
`;
const Swatch = styled.button`
  width: 11px;
  height: 13px;
  border: 1px solid #333;
  background: #5ad65a;
`;

/* ---------- bottom bars ---------- */

const TimeBar = styled.div`
  height: 15px;
  display: flex;
  align-items: center;
  gap: 2px;
  padding-left: 45px;
  &::before {
    content: "";
    width: 2px;
    height: 9px;
    margin-right: 1px;
    background: #5c5c5c;
  }
`;
const TimeButton = styled.button<{ $w: number }>`
  width: ${(p) => p.$w}px;
  height: 11px;
  border-radius: 1px;
  background: #606060;
`;
const Status = styled.footer`
  height: 19px;
  display: flex;
  align-items: center;
  gap: 3px;
  padding-left: 2px;
`;
const Listener = styled.textarea`
  align-self: stretch;
  width: 64px;
  height: 19px;
  border: 1px solid #9b8f8f;
  border-bottom: 3px solid #f4f4f4;
  padding: 0;
  resize: none;
  background: #dcc3c5;
`;
const Message = styled.p`
  flex: 1;
  padding-left: 3px;
  white-space: nowrap;
`;
const StatusButton = styled.button<{ $on?: boolean }>`
  flex: none;
  width: 14px;
  height: 14px;
  display: grid;
  place-items: center;
  background: ${(p) => (p.$on ? "#4f7fb8" : "none")};
`;
const Coord = styled.label`
  display: flex;
  align-items: center;
  gap: 2px;
  white-space: nowrap;
`;
const CoordBox = styled.span`
  display: flex;
  align-items: center;
  width: 44px;
  height: 11px;
  background: #646464;
  &::after {
    content: "";
    width: 3px;
    height: 5px;
    margin-right: 1px;
    background: linear-gradient(#ddd 0 2px, transparent 2px 3px, #ddd 3px);
  }
`;
const CoordInput = styled.input`
  flex: 1;
  width: 100%;
  min-width: 0;
  border: 0;
  padding: 0 1px;
  background: none;
`;
const Playback = styled.div`
  display: flex;
  gap: 2px;
  margin: 0 6px 0 18px;
`;
const KeyBig = styled.button`
  align-self: flex-start;
  width: 26px;
  height: 18px;
  display: grid;
  justify-content: center;
  align-items: start;
  margin-top: 1px;
  padding-top: 4px;
  overflow: hidden;
  background: #5c5c5c;
`;
const AutoKey = styled.button`
  width: 30px;
  height: 13px;
  background: #5c5c5c;
`;
const NavTools = styled.div`
  display: flex;
  gap: 1px;
  padding: 0 6px 0 3px;
`;

/* ---------- 3D scene ---------- */

type P = [number, number];
const lerp = (a: P, b: P, t: number): P => [a[0] + (b[0] - a[0]) * t, a[1] + (b[1] - a[1]) * t];
const path = (pts: P[], close = false) =>
  "M" + pts.map((p) => `${p[0].toFixed(1)} ${p[1].toFixed(1)}`).join("L") + (close ? "Z" : "");

// Vertices of the deck edge facing the viewer, left to right.
const front: P[] = [
  [216, 294], [222, 296], [229, 298], [234, 300], [239, 303], [243, 307], [246, 310],
  [272, 320], [304, 332], [340, 345], [381, 356], [426, 368], [474, 379], [528, 390], [581, 399],
  [594, 401], [604, 401], [617, 401], [629, 402], [640, 405], [650, 409], [658, 411],
];
const back: P[] = [
  [432, 221], [440, 222], [447, 224], [454, 225], [461, 225], [469, 225], [477, 225],
  [510, 229], [547, 234], [582, 240], [619, 245], [656, 253], [693, 261], [731, 270], [769, 278],
  [776, 281], [782, 284], [788, 286], [795, 288], [802, 289], [810, 290], [818, 291],
];
const base: P[] = [
  [222, 349], [226, 350], [232, 352], [236, 354], [241, 358], [245, 362], [248, 375],
  [273, 385], [305, 400], [342, 413], [383, 428], [429, 442], [478, 456], [533, 469], [578, 477],
  [592, 467], [602, 468], [614, 468], [627, 470], [637, 473], [646, 476], [653, 489],
];
const sill: P[] = [
  [248, 365], [272, 377], [305, 391], [342, 404], [383, 418], [428, 431], [476, 445], [531, 458], [578, 467],
];
const depth = [0, 0.13, 0.244, 0.358, 0.463, 0.567, 0.66, 0.754, 0.842, 0.925, 1];
const endDepth = [0, 0.12, 0.235, 0.343, 0.452, 0.548, 0.64, 0.73, 0.82, 0.9, 1];

// A deck vertex: the narrow strips only follow the curved rim at the two edges.
const deck = (i: number, t: number): P => {
  const inside = t > 0 && t < 1;
  if (inside && i < 6) return lerp(lerp(front[0], back[0], t), lerp(front[6], back[6], t), i / 6);
  if (inside && i > 14) return lerp(lerp(front[14], back[14], t), lerp(front[21], back[21], t), (i - 14) / 7);
  return lerp(front[i], back[i], t);
};

const rampMidF: P = [713, 436], rampMidB: P = [847, 320];
const noseF: P = [777, 464], noseB: P = [887, 353];
const noseSillF: P = [776, 490], noseSillB: P = [886, 377];
const noseBaseF: P = [776, 502], noseBaseB: P = [884, 386];
const shades = [
  "#8d8d8d", "#868686", "#808080", "#7a7a7a", "#6c6c6c", "#5c5c5c",
  "#6f6f6f", "#6b6b6b", "#6d6d6d", "#727272", "#777", "#7b7b7b", "#818181", "#7b7b7b",
  "#969696", "#989898", "#949494", "#8c8c8c", "#7e7e7e", "#6c6c6c", "#666",
];
const outline: P[] = [
  [190, 303], [216, 294], [432, 221], [447, 224], [457, 225], ...back.slice(6), rampMidB, noseB, noseBaseB, noseBaseF,
  [652, 489], [637, 494], [592, 487], [586, 480], [578, 477],
  [533, 469], [478, 456], [429, 442], [383, 428], [342, 413], [305, 400], [273, 385], [250, 375], [243, 373], [230, 373],
  [217, 364], [216, 352], [193, 330],
];
const footL: P[] = [[217, 352], [222, 349], [232, 350], [240, 354], [248, 363], [249, 373], [230, 373], [217, 364]];
const footR: P[] = [[578, 467], [600, 467], [622, 468], [640, 473], [652, 479], [652, 489], [637, 494], [592, 487], [586, 480]];

const lines: string[] = [
  ...front.map((_, i) => path(depth.map((t) => deck(i, t)))),
  ...depth.map((t) => path(front.map((_, i) => deck(i, t)))),
  ...front.map((f, i) => path([f, base[i]])),
  path([rampMidF, rampMidB]),
  path([noseF, noseB]),
  path([noseSillF, noseSillB]),
  ...depth.map((t, j) =>
    path([deck(21, t), lerp(rampMidF, rampMidB, (t + endDepth[j]) / 2), lerp(noseF, noseB, endDepth[j])])
  ),
  ...endDepth.map((t) => path([lerp(noseF, noseB, t), lerp(noseBaseF, noseBaseB, t)])),
  path(sill),
  path([[653, 478], [708, 483], [776, 490]]),
  path([[713, 436], [708, 493]]),
  path([[193, 323], [222, 349]]),
  path([[204, 298], [209, 339]]),
];

const SceneDrawing = () => (
  <Scene viewBox="46 132 892 466" preserveAspectRatio="xMidYMid meet" aria-label="Perspective view of the selected board">
    <path d={path(outline, true)} fill="#868686" />
    <path d={path([[190, 303], [204, 298], [209, 342], [193, 330]], true)} fill="#4e4e4e" />
    <path d={path([[204, 298], [216, 294], [222, 350], [216, 352], [209, 342]], true)} fill="#363636" />
    {shades.map((s, i) => (
      <path key={i} d={path([front[i], front[i + 1], base[i + 1], base[i]], true)} fill={s} />
    ))}
    <path d={path([front[21], rampMidF, noseF, noseBaseF, [653, 489]], true)} fill="#8b8b8b" />
    <path d={path([noseF, noseB, noseBaseB, noseBaseF], true)} fill="#8f8f8f" />
    <path d={path([...front, ...[...back].reverse()], true)} fill="#a1a1a1" />
    <path d={path([front[21], back[21], rampMidB, noseB, noseF, rampMidF], true)} fill="#b3b3b3" />
    <g fill="none" stroke="#f0f0f0" strokeWidth="1.200" strokeOpacity=".9">
      {lines.map((d, i) => (
        <path key={i} d={d} />
      ))}
    </g>
    <path d={path(footL, true)} fill="#9a9a9a" stroke="#eee" />
    <path
      d="M217 358l13 6 18-1M220 351l4 10M224 350l5 12M229 350l6 12M234 351l6 11M240 354l5 8M221 361v6M225 363v7M229 365v8M233 364v9M238 364v9M243 364v9"
      stroke="#f4f4f4"
      strokeWidth=".8"
      fill="none"
    />
    <path d={path(footR, true)} fill="#969696" stroke="#eee" />
    <path
      d="M590 475l20 2 28 6 5-4 9 0M582 467l6 6M600 468l-6 8M612 468l-6 9M625 470l-8 8M636 472l-8 8M645 476l-8 6M595 476v11M601 477v11M608 477v13M618 479v12M626 480v12M634 482v12M638 483v11M642 481v11M646 479v12"
      stroke="#f4f4f4"
      strokeWidth=".8"
      fill="none"
    />
    <path d="M584 470l6 6 2 11-6-7z" fill="#5d5d5d" stroke="#eee" strokeWidth=".6" />
    <path d={path(outline, true)} fill="none" stroke="#74ecf0" strokeWidth="2" strokeLinejoin="round" />

    <g fill="none" strokeWidth="1.200">
      <path d="M517 284v-24M504 274l13 3 9-3" stroke="#2326c4" />
      <path d="M504 274v16l-24-4M504 290l10-3" stroke="#1f8c22" />
      <path d="M526 274v14l-13-3" stroke="#d01f1f" />
      <path d="M523 291l14-7" stroke="#e8c81c" strokeWidth="1.800" />
    </g>
    <path d="M517.500 246l3 13h-6z" fill="#1518c8" />
    <path d="M479 285l10 1-1 4z" fill="#17801a" />
    <path d="M534 284l8-4-1 5-6 2z" fill="#c01818" />
    <g fontFamily="Roboto, sans-serif" fontSize="6" fontWeight="700">
      <text x="517" y="245" fill="#20249c">z</text>
      <text x="476" y="284" fill="#1f8c22">Y</text>
      <text x="543" y="281" fill="#d8c820">x</text>
      <text x="60" y="567" fill="#2c2ca8">z</text>
      <text x="49" y="579" fill="#2a7a2a">y</text>
      <text x="71" y="576" fill="#9c2a2a">x</text>
    </g>
    <path d="M61 581v-15" stroke="#2c2ca8" />
    <path d="M61 581l-9-2" stroke="#2a7a2a" />
    <path d="M61 581l10-5" stroke="#9c2a2a" />

    <ellipse cx="903" cy="178" rx="21" ry="8" fill="#262626" stroke="#85888c" strokeWidth="3" />
    <path d="M884 185l4 1M923 184l3-1M898 187h10" stroke="#c0c2c6" strokeWidth="2" />
    <path d="M891 159l12-4 13 3v16l-11 6-14-5z" fill="#929292" />
    <path d="M891 159l12-4 13 3-11 5z" fill="#a6a6a6" />
    <path d="M905 163l11-5v16l-11 6z" fill="#858585" />
    <path d="M894 168l7 2M908 171l6-3M900 158l4 1" stroke="#6c6c6c" strokeWidth="2" />
  </Scene>
);

/* ---------- data ---------- */

const menus = ["File", "Edit", "Tools", "Group", "Views", "Create", "Modifiers", "Animation", "Graph Editors", "Rendering", "Civil View", "Customize", "Scripting", "Interactive", "Content", "Corona", "Help", "rapidTools"];
const active = ["move", "keyb", "angle", "ribbon"];
const tools = (names: string) =>
  names.split(" ").map((n, i) =>
    n === "|" ? (
      <Sep key={i} />
    ) : (
      <ToolButton key={i} $on={active.includes(n)} aria-label={n}>
        <Icon name={n} />
      </ToolButton>
    )
  );
const sideItems = (names: string) =>
  names.split(" ").map((n, i) =>
    n === "-" ? (
      <SideRule key={i} />
    ) : (
      <SideButton key={i} aria-label={n}>
        <Icon name={n} />
      </SideButton>
    )
  );
const cells = (names: string) => (
  <Cells>
    {names.split(" ").map((n, i) => (
      <Cell key={i} aria-label={n}>
        <Icon name={n} size={13} />
      </Cell>
    ))}
  </Cells>
);
const scripts: [string, string][][] = [
  [["disk", "soulburnScriptsListerUI"], ["meshP", "pivotPlacerUI"], ["meshC", "pivotPlacerCenter"], ["dropper", "objectDropperUI"]],
  [["attach", "objectAttacherUI"], ["detach", "objectDetacherUI"], ["wire", "wireMakerUI"]],
  [["reset", "xFormResetterUI"], ["assign", "AssignMaterialToSelection"], ["rxyz", "transformRandomizerUI"]],
];
const tabs: [string, number][] = [["Luda_tools", 46], ["Modeling", 64], ["Freeform", 42], ["Selection", 76], ["Object Paint", 52], ["Populate", 74]];
const objectTypes = ["Line", "Rectangle", "Circle", "Ellipse", "Arc", "Donut", "NGon", "Star", "Text", "Helix", "Egg", "Section", "Freehand"];
const coords = [["X:", "365,738mm"], ["Y:", "-39,845mm"], ["Z:", "0,216mm"]];

export default function App() {
  return (
    <Shell>
      <Global />
      <TitleBar>
        <Icon name="app3" size={9} />
        <TitleText>Star1.max - Autodesk 3ds Max 2020</TitleText>
        <WinButtons>
          {["min", "restore", "close"].map((n) => (
            <button key={n} aria-label={n}>
              <Icon name={n} size={9} />
            </button>
          ))}
        </WinButtons>
      </TitleBar>
      <MenuBar>
        <Menus>
          {menus.map((m) => (
            <MenuItem key={m}>{m}</MenuItem>
          ))}
        </Menus>
        <More aria-label="More menus">»</More>
        <Drop label="Account" value="Sign In" w={77} light>
          <Icon name="user" size={12} />
        </Drop>
        <WorkLabel htmlFor="workspace">Workspaces:</WorkLabel>
        <SelectBox $w={88}>
          <Select id="workspace">
            <option>Default</option>
          </Select>
        </SelectBox>
      </MenuBar>
      <Toolbar>
        {tools("undo redo | link unlink bind |")}
        <Drop label="Selection filter" value="All" w={43} />
        {tools("selObj selName rect windowSel | move rotate scale place")}
        <Drop label="Reference system" value="View" w={43} />
        {tools("pivot | manip keyb | snap angle percent spinner | braces")}
        <Drop label="Named selection" value="Create Selection Se" w={75} />
        {tools("| mirror align | layers stack | ribbon curve dope | schematic | potGear potWin potPlay potCloud four")}
        <ToolButton>
          <Badge $bg="#1f6fe0" $fg="#fff">RB</Badge>
        </ToolButton>
        {tools("checker chevrons diamonds")}
        <ToolButton>
          <Badge $round $bg="#1c2f55" $fg="#4f8ee0">QR</Badge>
        </ToolButton>
        {tools("warn |")}
        <ToolButton>
          <Badge $bg="#3a78b4" $fg="#fff">Rc</Badge>
        </ToolButton>
        {tools("tools")}
      </Toolbar>

      <Body>
        <Side>
          <SideCol>{sideItems("- bulb sun cam trees list treeHalf treeCard ring ballStack quad playBox camPlus frameT pot bulbO")}</SideCol>
          <SideCol>
            {sideItems("- sphere cube cyl grid spline circlePts - redNet drop - meshC meshP rxyz assign - goldBall goldCube prism sphereGrid tiles")}
          </SideCol>
        </Side>
        <Main>
          <Ribbon>
            <Tabs>
              {tabs.map(([t, w], i) => (
                <Tab key={t} $w={w} $on={i === 0}>{t}</Tab>
              ))}
              <TabToggle aria-label="Collapse ribbon" />
            </Tabs>
            <Groups>
              <Group>
                <GroupBody $pad="0 4px">
                  {cells("pBox pCyl")}
                  {cells("pBall pPlane")}
                </GroupBody>
                <GroupName>Primitives</GroupName>
              </Group>
              <Group>
                <GroupBody $pad="0 2px">
                  {cells("mCube mHeart goldCube sphere")}
                  {cells("goldBall mHalf mLeaf goldCube mLink")}
                </GroupBody>
                <GroupName>Modifi</GroupName>
              </Group>
              <Group>
                <GroupBody $pad="0 6px 0 4px">
                  {scripts.map((row, i) => (
                    <ScriptRow key={i}>
                      {row.map(([icon, label]) => (
                        <Script key={label}>
                          <Icon name={icon} size={11} />
                          {label}
                        </Script>
                      ))}
                    </ScriptRow>
                  ))}
                </GroupBody>
                <GroupName>Soulburn</GroupName>
              </Group>
            </Groups>
          </Ribbon>
          <Work>
            <Viewport>
              <SceneDrawing />
              <ViewLabel>
                <span>[ + ]</span>
                <span>[Perspective ]</span>
                <span>[Performance ]</span>
                <span>[Edged Faces ]</span>
              </ViewLabel>
              <Stats>
                <dt></dt><dd>Total</dd>
                <dt>Polys:</dt><dd>2 673</dd>
                <dt>Verts:</dt><dd>2 236</dd>
                <dt></dt><dd></dd>
                <dt>FPS:</dt><dd>10,208</dd>
              </Stats>
            </Viewport>
            <CommandPanel>
              <PanelTabs>
                {["plus", "modify", "hier", "motion", "display", "wrench"].map((n, i) => (
                  <PanelTab key={n} $on={i === 0} aria-label={n}>
                    <Icon name={n} size={12} />
                  </PanelTab>
                ))}
              </PanelTabs>
              <Kinds>
                {["dot", "shapes", "lamp", "camera", "tape", "waves", "gears"].map((n, i) => (
                  <Kind key={n} $on={i === 1} aria-label={n}>
                    <Icon name={n} size={10} />
                  </Kind>
                ))}
              </Kinds>
              <Drop label="Category" value="Splines" w={132} />
              <Rollouts>
                <Rollout>
                  <RolloutTitle>Object Type</RolloutTitle>
                  <CheckRow $dim>
                    <Check type="checkbox" disabled />
                    AutoGrid
                  </CheckRow>
                  <CheckRow>
                    <Check type="checkbox" defaultChecked />
                    <StartShape>Start New Shape</StartShape>
                  </CheckRow>
                  <ObjectGrid>
                    {objectTypes.map((o) => (
                      <ObjectButton key={o}>{o}</ObjectButton>
                    ))}
                  </ObjectGrid>
                </Rollout>
                <Rollout>
                  <RolloutTitle>Name and Color</RolloutTitle>
                  <NameRow>
                    <NameInput aria-label="Object name" defaultValue="Плата001" />
                    <Swatch aria-label="Object colour" />
                  </NameRow>
                </Rollout>
              </Rollouts>
            </CommandPanel>
          </Work>
        </Main>
      </Body>

      <TimeBar>
        <TimeButton $w={9}>&lt;</TimeButton>
        <TimeButton $w={78}>0 / 100</TimeButton>
        <TimeButton $w={9}>&gt;</TimeButton>
      </TimeBar>
      <Status>
        <Listener aria-label="Script listener" />
        <Message>1 Object Selected</Message>
        <StatusButton $on aria-label="Isolate">
          <Icon name="isolate" size={13} />
        </StatusButton>
        <StatusButton aria-label="Lock">
          <Icon name="lock" size={10} />
        </StatusButton>
        <StatusButton aria-label="Transform mode">
          <Icon name="xformMode" size={10} />
        </StatusButton>
        {coords.map(([axis, v]) => (
          <Coord key={axis}>
            {axis}
            <CoordBox>
              <CoordInput defaultValue={v} />
            </CoordBox>
          </Coord>
        ))}
        <Coord as="span">Grid = 10,0mm</Coord>
        <Playback>
          {["first", "prev", "play", "next", "last"].map((n) => (
            <StatusButton key={n} aria-label={n}>
              <Icon name={n} size={11} />
            </StatusButton>
          ))}
        </Playback>
        <KeyBig aria-label="Set key">
          <Icon name="key" size={16} />
        </KeyBig>
        <AutoKey>Auto Key</AutoKey>
        <Drop label="Key filter" value="Selected" w={74} />
        <NavTools>
          {["zoom", "zoomAll", "extents", "extAll"].map((n) => (
            <StatusButton key={n} aria-label={n}>
              <Icon name={n} size={12} />
            </StatusButton>
          ))}
        </NavTools>
      </Status>
    </Shell>
  );
}
